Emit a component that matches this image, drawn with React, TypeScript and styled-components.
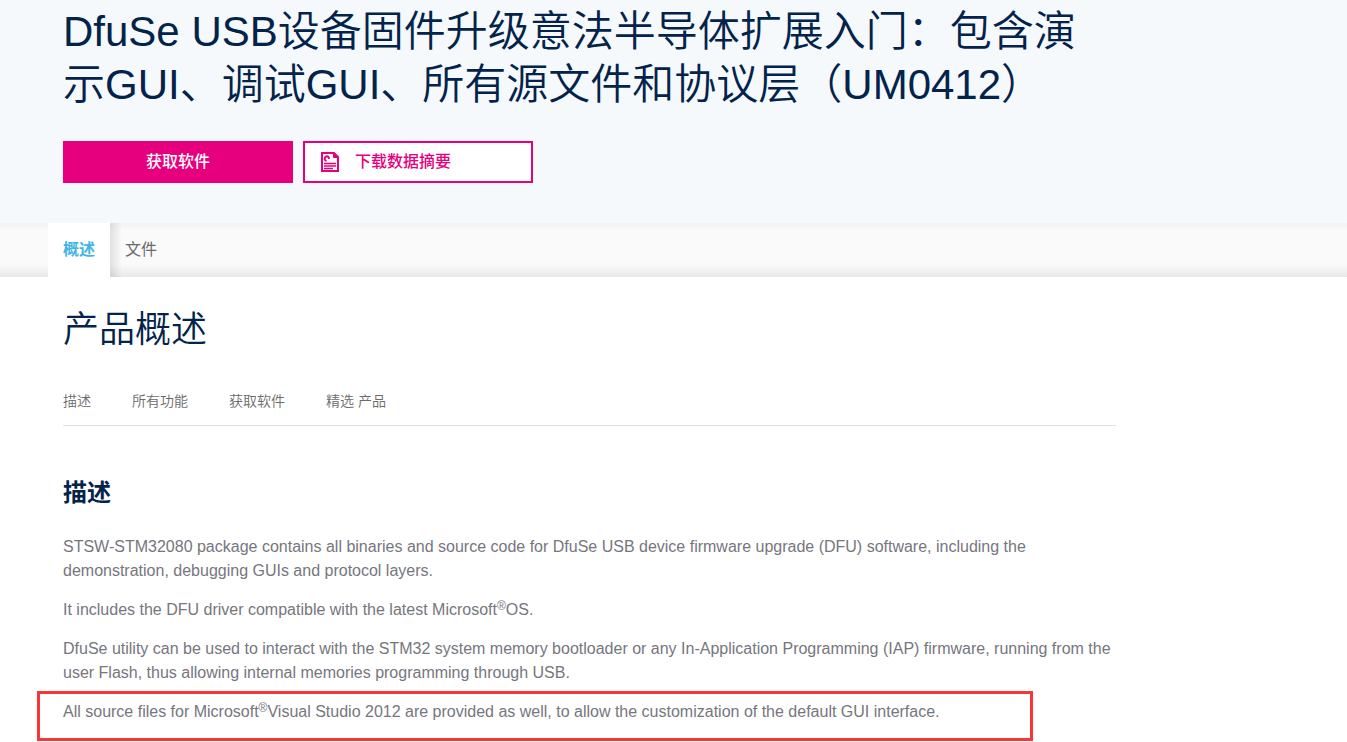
import React from "react";
import styled, { createGlobalStyle } from "styled-components";

const GlobalStyle = createGlobalStyle`
  *, *::before, *::after { box-sizing: border-box; }
  body {
    margin: 0;
    background: #fff;
    color: #76767e;
    font-family: "Liberation Sans", Arial, "Noto Sans CJK SC", sans-serif;
    font-size: 16px;
    line-height: 24px;
  }
  h1, h2, h3, p { margin: 0; }
`;

const Hero = styled.header`
  background: #f5f9fc;
  padding: 5px 63px 40px;
`;

const Title = styled.h1`
  max-width: 1053px;
  color: #03234b;
  font-size: 42px;
  font-weight: 350;
  line-height: 53px;
`;

const Actions = styled.div`
  display: flex;
  gap: 10px;
  margin-top: 30px;
`;

const Button = styled.button<{ $outline?: boolean }>`
  display: flex;
  align-items: center;
  justify-content: ${(p) => (p.$outline ? "flex-start" : "center")};
  gap: 15px;
  width: 230px;
  height: 42px;
  padding: 0 15px;
  border: 2px solid #e6007e;
  background: ${(p) => (p.$outline ? "#fff" : "#e6007e")};
  color: ${(p) => (p.$outline ? "#e6007e" : "#fff")};
  font: 500 16px/24px "Noto Sans CJK SC", sans-serif;
  cursor: pointer;
`;

const ButtonLabel = styled.span`
  padding-bottom: 4px;
`;

const TabBar = styled.nav`
  display: flex;
  height: 54px;
  padding: 0 48px;
  background: linear-gradient(#f3f3f3, #fafafa 8px, #fafafa 42px, #e8e8e8);
`;

const Tab = styled.a<{ $active?: boolean }>`
  display: flex;
  align-items: center;
  padding: 0 15px;
  background: ${(p) =>
    p.$active ? "#fff" : "linear-gradient(90deg, rgba(0, 0, 0, 0.1), rgba(0, 0, 0, 0) 12px)"};
  color: ${(p) => (p.$active ? "#3fb4e5" : "#6b6b6b")};
  font-weight: ${(p) => (p.$active ? 700 : 400)};
  text-decoration: none;
`;

const Main = styled.main`
  max-width: 1179px;
  padding: 26px 63px 18px;
`;

const SectionTitle = styled.h2`
  color: #03234b;
  font-size: 36px;
  font-weight: 350;
  line-height: 54px;
`;

const Anchors = styled.nav`
  display: flex;
  gap: 41px;
  margin-top: 32px;
  padding-bottom: 12px;
  border-bottom: 1px solid #e3e3e5;
`;

const Anchor = styled.a`
  color: #6b6b6b;
  font-size: 14px;
  font-weight: 350;
  text-decoration: none;
`;

const Description = styled.section`
  display: flex;
  flex-direction: column;
  gap: 15px;
  margin-top: 49px;
`;

const Subtitle = styled.h3`
  margin-bottom: 9px;
  color: #03234b;
  font-size: 24px;
  font-weight: 700;
  line-height: 36px;
`;

const Paragraph = styled.p``;

const Marked = styled(Paragraph)`
  position: relative;

  &::after {
    content: "";
    position: absolute;
    top: -9px;
    left: -26px;
    width: 996px;
    max-width: calc(100% + 52px);
    height: 50px;
    border: 3px solid #fb3535;
    pointer-events: none;
  }
`;

const Sup = styled.sup`
  position: relative;
  top: -5px;
  font-size: 12px;
  line-height: 0;
  vertical-align: baseline;
`;

const DocIcon = () => (
  <svg width="20" height="20" viewBox="0 0 20 20" fill="none" stroke="#e6007e" aria-hidden="true">
    <path d="M2 1h12l4 4v14H2z" strokeWidth="2" />
    <path d="M13.500 1v4.500H18z" fill="#e6007e" strokeWidth="1" />
    <path d="M6.500 9C4.500 8.500 4 6.500 5.500 5S9 4.500 9 7" strokeWidth="2" />
    <path d="M4 11.500h12M4 14h12M4 16.500h9" strokeWidth="1.500" />
  </svg>
);

const anchors = ["描述", "所有功能", "获取软件", "精选 产品"];

export default function App() {
  return (
    <>
      <GlobalStyle />
      <Hero>
        <Title>
          DfuSe USB设备固件升级意法半导体扩展入门：包含演示GUI、调试GUI、所有源文件和协议层（UM0412）
        </Title>
        <Actions>
          <Button type="button">
            <ButtonLabel>获取软件</ButtonLabel>
          </Button>
          <Button type="button" $outline>
            <DocIcon />
            <ButtonLabel>下载数据摘要</ButtonLabel>
          </Button>
        </Actions>
      </Hero>
      <TabBar>
        <Tab href="#overview" $active>概述</Tab>
        <Tab href="#files">文件</Tab>
      </TabBar>
      <Main id="overview">
        <SectionTitle>产品概述</SectionTitle>
        <Anchors>
          {anchors.map((label) => (
            <Anchor key={label} href="#description">{label}</Anchor>
          ))}
        </Anchors>
        <Description id="description">
          <Subtitle>描述</Subtitle>
          <Paragraph>
            STSW-STM32080 package contains all binaries and source code for DfuSe USB device firmware
            upgrade (DFU) software, including the demonstration, debugging GUIs and protocol layers.
          </Paragraph>
          <Paragraph>
            It includes the DFU driver compatible with the latest Microsoft<Sup>®</Sup>OS.
          </Paragraph>
          <Paragraph>
            DfuSe utility can be used to interact with the STM32 system memory bootloader or any
            In-Application Programming (IAP) firmware, running from the user Flash, thus allowing
            internal memories programming through USB.
          </Paragraph>
          <Marked>
            All source files for Microsoft<Sup>®</Sup>Visual Studio 2012 are provided as well, to
            allow the customization of the default GUI interface.
          </Marked>
        </Description>
      </Main>
    </>
  );
}
